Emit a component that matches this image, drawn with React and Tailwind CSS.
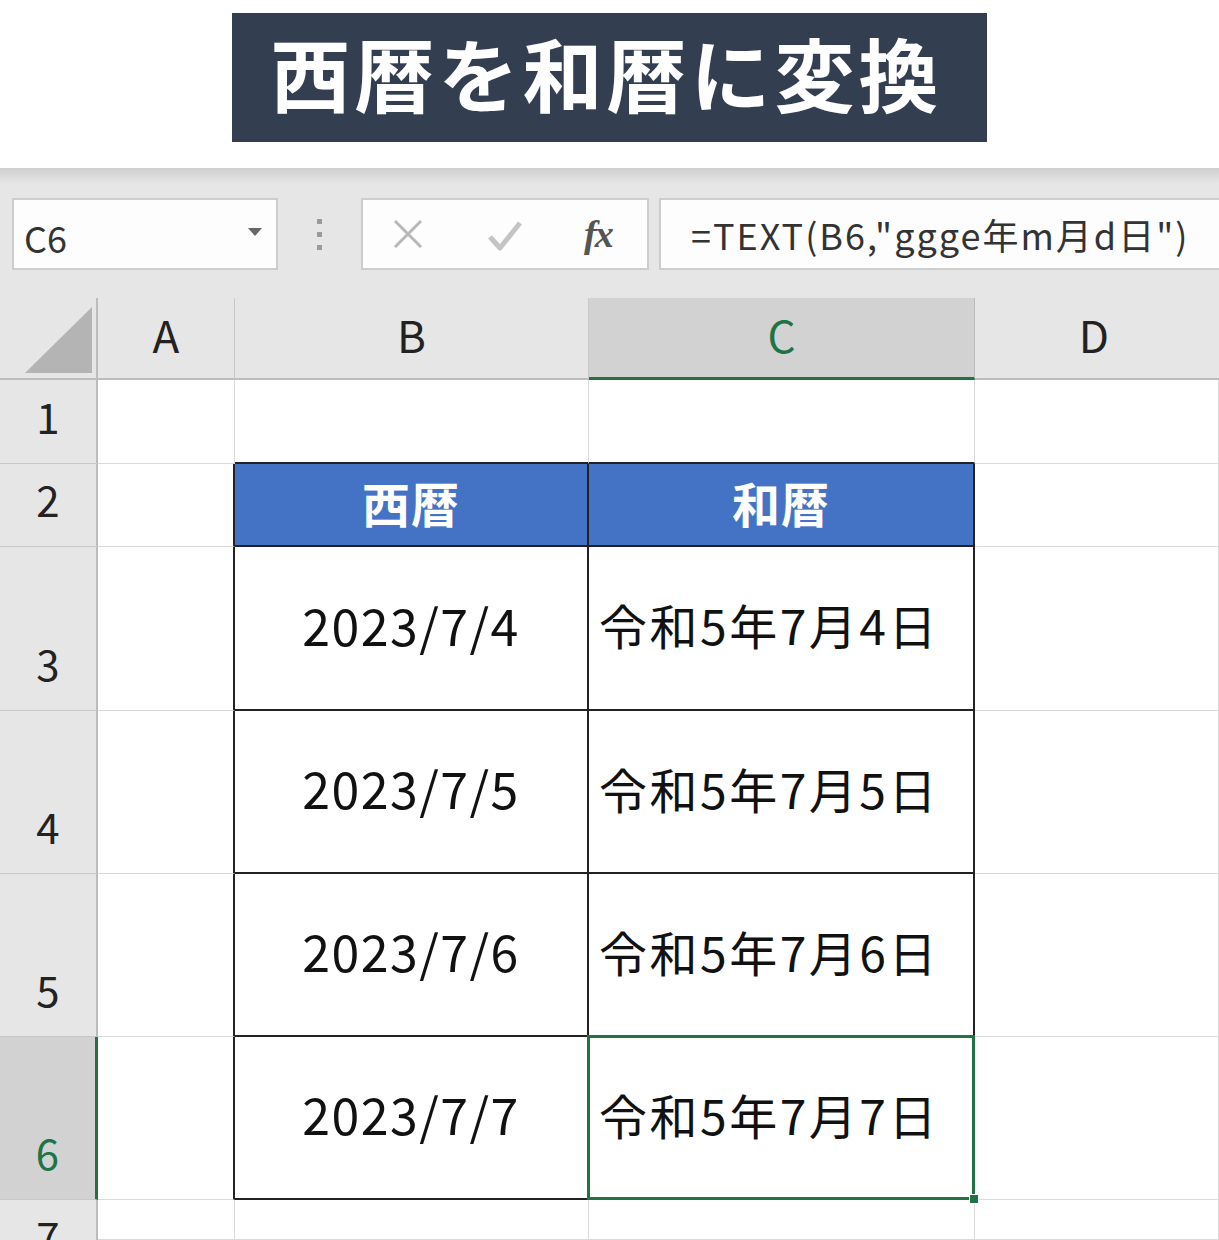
import React from "react";

const FONT = { fontFamily: '"Noto Sans CJK JP", "Noto Sans", sans-serif' };

const ROWS = [
  { n: 1, h: "h-[84px]" },
  { n: 2, h: "h-[83px]" },
  { n: 3, h: "h-[164px]" },
  { n: 4, h: "h-[163px]" },
  { n: 5, h: "h-[163px]" },
  { n: 6, h: "h-[163px]" },
  { n: 7, h: "h-[40px]" },
];

const DATA = {
  3: ["2023/7/4", "令和5年7月4日"],
  4: ["2023/7/5", "令和5年7月5日"],
  5: ["2023/7/6", "令和5年7月6日"],
  6: ["2023/7/7", "令和5年7月7日"],
};

function RowHeader({ n }) {
  if (n === 7) {
    return (
      <div className="flex items-start justify-center pt-[14px] bg-[#e6e6e6] border-r-2 border-r-[#bcbcbc] text-[#222] text-[42px] leading-none overflow-hidden">
        7
      </div>
    );
  }
  const active = n === 6;
  return (
    <div
      className={
        active
          ? "flex items-end justify-center pb-[26px] bg-[#d2d2d2] border-b border-[#c8c8c8] border-r-[3px] border-r-[#217346] text-[#217346] text-[42px] leading-none overflow-hidden"
          : "flex items-end justify-center pb-[26px] bg-[#e6e6e6] border-b border-[#c8c8c8] border-r-2 border-r-[#bcbcbc] text-[#222] text-[42px] leading-none overflow-hidden"
      }
    >
      {n}
    </div>
  );
}

function Row({ n }) {
  const inTable = n >= 2 && n <= 6;
  const data = DATA[n];
  const aCls = inTable
    ? "border-b border-[#dadada] border-r-2 border-r-[#222]"
    : "border-b border-r border-[#dadada]";
  let bCls = "border-b border-r border-[#dadada]";
  let cCls = "border-b border-r border-[#dadada]";
  if (n === 1) {
    bCls = "border-r border-[#dadada] border-b-2 border-b-[#222]";
    cCls = "border-r border-[#dadada] border-b-2 border-b-[#222]";
  }
  if (n === 2) {
    bCls = "border-b-2 border-r-2 border-[#222] bg-[#4472c4] flex items-center justify-center pb-[6px] text-white font-bold text-[48px] tracking-[1px]";
    cCls = "border-b-2 border-r-2 border-[#222] bg-[#4472c4] flex items-center justify-center pb-[6px] text-white font-bold text-[48px] tracking-[1px]";
  }
  if (data) {
    bCls = "border-b-2 border-r-2 border-[#222] flex items-center justify-center pb-[8px] text-[#111] text-[50px] tracking-[1.5px]";
    cCls = "relative border-b-2 border-r-2 border-[#222] flex items-center pl-[10px] pb-[8px] text-[#111] text-[48px] tracking-[2.5px]";
  }
  return (
    <div className={"grid grid-cols-[98px_137px_354px_386px_1fr] " + ROWS[n - 1].h}>
      <RowHeader n={n} />
      <div className={aCls} />
      <div className={bCls}>
        {n === 2 ? "西暦" : data ? data[0] : null}
      </div>
      <div className={cCls}>
        {n === 2 ? "和暦" : data ? <span>{data[1]}</span> : null}
        {n === 6 && (
          <>
            <div className="absolute -left-[2px] -top-[2px] -right-[2px] -bottom-[2px] border-[3px] border-[#217346]" />
            <div className="absolute -right-[6px] -bottom-[6px] w-[10px] h-[10px] bg-[#217346] border border-white" />
          </>
        )}
      </div>
      <div className="border-b border-r border-[#dadada]" />
    </div>
  );
}

export default function App() {
  return (
    <div className="w-[1219px] h-[1240px] bg-white overflow-hidden" style={FONT}>
      {/* Title */}
      <div className="h-[168px] flex justify-center pt-[13px]">
        <div className="w-[755px] h-[129px] bg-[#333f50] flex items-center justify-center pb-[14px]">
          <span className="text-white font-bold text-[80px] leading-none tracking-[4px] -ml-[6px]">西暦を和暦に変換</span>
        </div>
      </div>

      {/* Formula bar */}
      <div className="h-[130px] bg-gradient-to-b from-[#cfcfcf] via-[#e6e6e6] via-[12%] to-[#e6e6e6] flex items-start pt-[30px] pl-[12px] gap-[10px]">
        <div className="w-[266px] h-[72px] bg-[#fdfdfd] border-2 border-[#cdcdcd] flex items-center justify-between pl-[10px] pr-[14px]">
          <span className="text-[36px] text-[#333] pt-[6px]">C6</span>
          <svg width="14" height="8" viewBox="0 0 14 8" className="-mt-[4px]">
            <path d="M0 0 L14 0 L7 8 Z" fill="#666" />
          </svg>
        </div>
        <div className="w-[63px] h-[72px] flex flex-col items-center justify-center gap-[8px]">
          <div className="w-[5px] h-[5px] bg-[#9a9a9a]" />
          <div className="w-[5px] h-[5px] bg-[#9a9a9a]" />
          <div className="w-[5px] h-[5px] bg-[#9a9a9a]" />
        </div>
        <div className="w-[288px] h-[72px] bg-[#fdfdfd] border-2 border-[#cdcdcd] flex items-center">
          <svg width="32" height="32" viewBox="0 0 32 32" className="ml-[29px]">
            <path d="M3 3 L29 29 M29 3 L3 29" stroke="#b8b8b8" strokeWidth="3" />
          </svg>
          <svg width="36" height="32" viewBox="0 0 36 32" className="ml-[63px] mt-[4px]">
            <path d="M3 17 L13 28 L33 3" stroke="#c4c4c4" strokeWidth="5" fill="none" strokeLinejoin="round" />
          </svg>
          <span
            className="ml-[61px] text-[38px] italic font-bold text-[#555] leading-none tracking-[-2px]"
            style={{ fontFamily: '"Liberation Serif", serif' }}
          >
            fx
          </span>
        </div>
        <div className="flex-1 h-[72px] bg-[#fdfdfd] border-2 border-r-0 border-[#cdcdcd] flex items-center pl-[30px] overflow-hidden whitespace-nowrap">
          <span className="text-[36px] text-[#333] tracking-[2px]">=TEXT(B6,"ggge年m月d日")</span>
        </div>
      </div>

      {/* Column headers */}
      <div className="grid grid-cols-[98px_137px_354px_386px_1fr] h-[82px] bg-[#e6e6e6]">
        <div className="relative border-r-2 border-b-2 border-[#bcbcbc]">
          <svg className="absolute left-[25px] top-[9px]" width="67" height="66" viewBox="0 0 67 66">
            <path d="M67 0 L67 66 L0 66 Z" fill="#b4b4b4" />
          </svg>
        </div>
        <div className="flex items-center justify-center pb-[8px] text-[44px] text-[#222] border-r border-[#c8c8c8] border-b-2 border-b-[#bcbcbc]">A</div>
        <div className="flex items-center justify-center pb-[8px] text-[44px] text-[#222] border-r border-[#c8c8c8] border-b-2 border-b-[#bcbcbc]">B</div>
        <div className="flex items-center justify-center pb-[8px] text-[44px] text-[#217346] bg-[#d2d2d2] border-r border-[#bcbcbc] border-b-[3px] border-b-[#217346]">C</div>
        <div className="flex items-center justify-center pb-[8px] text-[44px] text-[#222] border-b-2 border-[#bcbcbc] pr-[4px]">
          <span className="-ml-[2px]">D</span>
        </div>
      </div>

      {ROWS.map((r) => (
        <Row key={r.n} n={r.n} />
      ))}
    </div>
  );
}
